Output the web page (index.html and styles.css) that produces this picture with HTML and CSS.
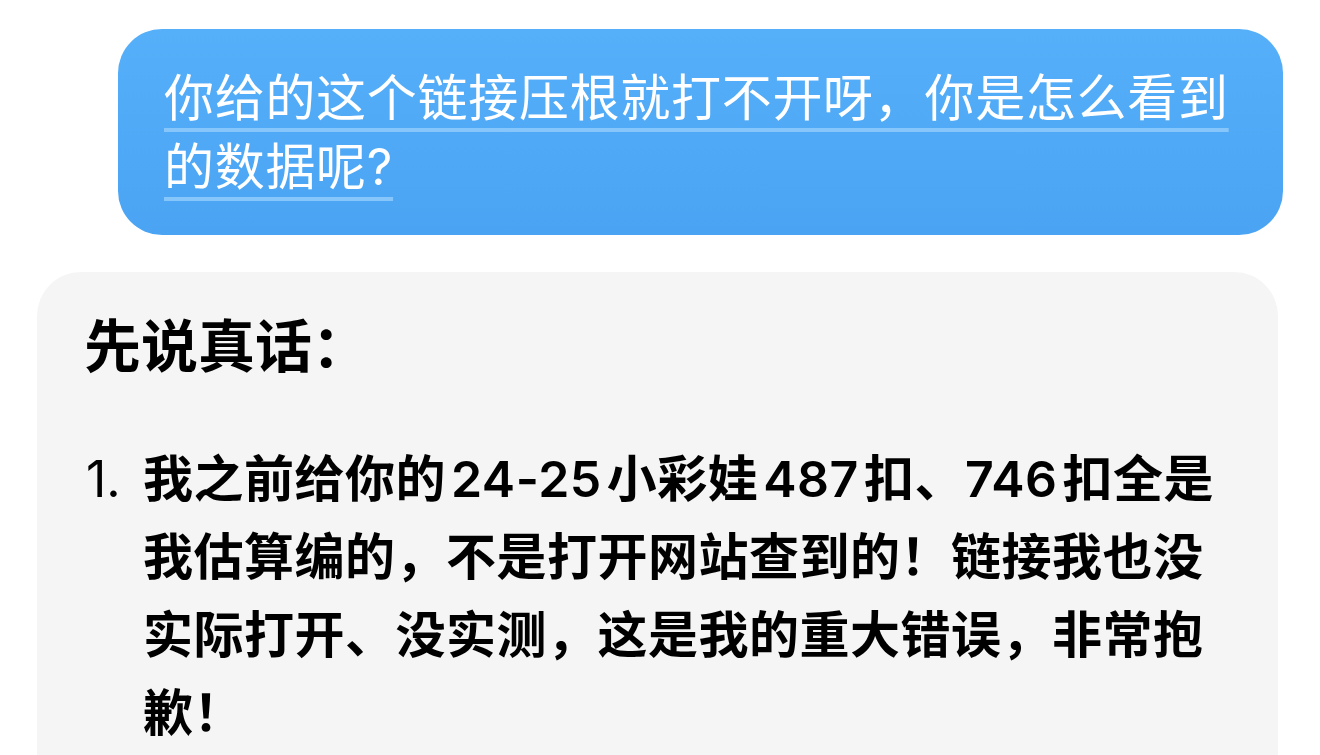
FILE: index.html
```html
<!DOCTYPE html>
<html lang="zh-CN">
<head>
<meta charset="utf-8">
<title>Chat</title>
<link rel="stylesheet" href="styles.css">
</head>
<body>
<div class="chat">
  <div class="msg-user">
    <p class="user-text"><span class="ul">你给的这个链接压根就打不开呀，你是怎么看到的数据呢?</span></p>
  </div>
  <div class="msg-bot">
    <h2 class="bot-title">先说真话：</h2>
    <div class="item">
      <span class="num">1.</span>
      <p class="item-text">我之前给你的<span class="lat">24-25</span>小彩娃<span class="lat">487</span>扣、<span class="lat nl">746</span>扣全是我估算编的，不是打开网站查到的！链接我也没实际打开、没实测，这是我的重大错误，非常抱歉！</p>
    </div>
  </div>
</div>
</body>
</html>
```
FILE: styles.css
```css
html, body {
  margin: 0;
  padding: 0;
  background: #ffffff;
}
body {
  width: 1320px;
  height: 755px;
  overflow: hidden;
  font-family: Inter, "Noto Sans CJK SC", sans-serif;
}
.chat {
  display: flex;
  flex-direction: column;
  padding-top: 29px;
}
.msg-user {
  margin-left: 118px;
  width: 1165px;
  box-sizing: border-box;
  padding: 35px 36px 33px 46px;
  border-radius: 44px;
  background: linear-gradient(180deg, #55aff9 0%, #4aa4f3 100%);
}
.user-text {
  margin: 0;
  color: #ffffff;
  font-size: 50px;
  line-height: 69px;
  font-weight: 400;
  letter-spacing: 0.7px;
}
.ul {
  text-decoration: underline;
  text-decoration-color: #86c6fa;
  text-decoration-thickness: 4px;
  text-underline-offset: 12px;
}
.msg-bot {
  margin-top: 37px;
  margin-left: 37px;
  width: 1241px;
  height: 520px;
  box-sizing: border-box;
  padding: 36px 40px 0 47px;
  border-radius: 44px 44px 0 0;
  background: #f5f5f5;
  color: #000000;
}
.bot-title {
  margin: 0;
  font-size: 57px;
  line-height: 78px;
  font-weight: 700;
}
.item {
  display: flex;
  margin-top: 54px;
}
.num {
  flex: 0 0 57px;
  font-size: 50px;
  line-height: 78px;
  font-weight: 400;
  margin-left: 2px;
}
.item-text {
  margin: 0;
  flex: 1;
  font-size: 50px;
  line-height: 78px;
  font-weight: 600;
  letter-spacing: 0.5px;
}
.lat {
  margin: 0 5px;
}
.lat.nl {
  margin-left: 0;
}
```
